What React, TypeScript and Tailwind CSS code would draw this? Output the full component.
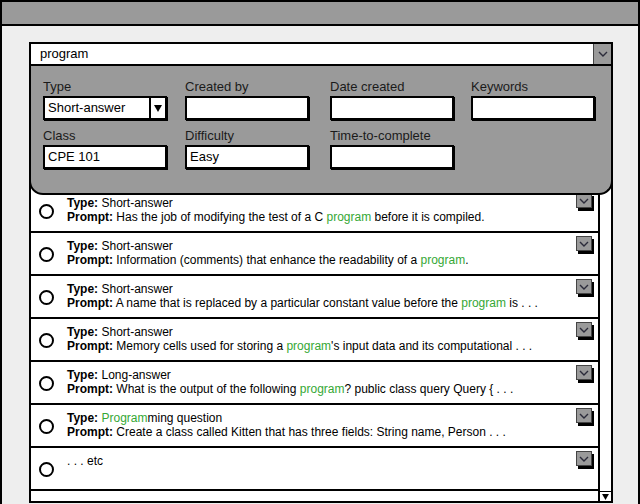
import type { ReactNode } from "react";

function Hl({ children }: { children: ReactNode }) {
  return <span className="text-[#35a835]">{children}</span>;
}

type Question = {
  type?: ReactNode;
  prompt?: ReactNode;
  note?: string;
};

const questions: Question[] = [
  {
    type: "Short-answer",
    prompt: (
      <>
        Has the job of modifying the test of a C <Hl>program</Hl> before it is compiled.
      </>
    ),
  },
  {
    type: "Short-answer",
    prompt: (
      <>
        Information (comments) that enhance the readability of a <Hl>program</Hl>.
      </>
    ),
  },
  {
    type: "Short-answer",
    prompt: (
      <>
        A name that is replaced by a particular constant value before the <Hl>program</Hl> is . . .
      </>
    ),
  },
  {
    type: "Short-answer",
    prompt: (
      <>
        Memory cells used for storing a <Hl>program</Hl>'s input data and its computational . . .
      </>
    ),
  },
  {
    type: "Long-answer",
    prompt: (
      <>
        What is the output of the following <Hl>program</Hl>? public class query Query {"{"} . . .
      </>
    ),
  },
  {
    type: (
      <>
        <Hl>Program</Hl>ming question
      </>
    ),
    prompt: "Create a class called Kitten that has three fields: String name, Person . . .",
  },
  { note: ". . . etc" },
];

function Chevron() {
  return (
    <svg width="10" height="6" viewBox="0 0 10 6" fill="none">
      <path d="M1 1 L5 5 L9 1" stroke="#2b2b3a" strokeWidth="1.4" />
    </svg>
  );
}

function DownTriangle({ size = 8 }: { size?: number }) {
  return (
    <svg width={size} height={size - 1} viewBox="0 0 8 7">
      <path d="M0 0 H8 L4 7 Z" fill="#000" />
    </svg>
  );
}

function Field({ label, value, select }: { label: string; value?: string; select?: boolean }) {
  return (
    <div className="flex w-[124px] flex-col">
      <span className="h-[16px] text-[13px] leading-[16px] text-[#1a1a1a]">{label}</span>
      <div className="mt-[1px] flex h-[24px] border-2 border-black bg-white shadow-[1px_1px_0_#000]">
        <span className="flex-1 pl-[3px] text-[13px] leading-[20px] text-black">{value}</span>
        {select && (
          <span className="flex w-[16px] items-center justify-center border-l-2 border-black">
            <DownTriangle />
          </span>
        )}
      </div>
    </div>
  );
}

function QuestionRow({ q }: { q?: Question }) {
  return (
    <div className="relative flex h-[43px] shrink-0 border-b-2 border-black bg-white">
      <div className="flex w-[36px] shrink-0 items-center pl-[8px] pt-[2px]">
        {q && <span className="h-[15px] w-[15px] rounded-full border-2 border-black" />}
      </div>
      {q && (
        <div className="pt-[6px] text-[12px] leading-[14px] text-black">
          {q.note ? (
            <div>{q.note}</div>
          ) : (
            <>
              <div>
                <b>Type:</b> {q.type}
              </div>
              <div>
                <b>Prompt:</b> {q.prompt}
              </div>
            </>
          )}
        </div>
      )}
      {q && (
        <div className="absolute right-[6px] top-[3px] flex h-[15px] w-[16px] items-center justify-center border border-[#444] bg-[#9a9a9a] shadow-[2px_3px_0_#000]">
          <Chevron />
        </div>
      )}
    </div>
  );
}

export default function App() {
  return (
    <div className="relative flex h-[504px] w-[640px] flex-col overflow-hidden border-x-2 border-black bg-[#eeeeee] font-['Liberation_Sans',Arial,sans-serif]">
      <div className="h-[26px] shrink-0 border-y-2 border-black bg-[#9a9a9a]" />

      <div className="relative mb-[1px] ml-[27px] mr-[25px] mt-[16px] flex min-h-0 flex-1 flex-col">
        <div className="flex h-[24px] shrink-0 border-2 border-black bg-white">
          <span className="flex-1 pl-[9px] text-[13px] leading-[20px] text-black">program</span>
          <span className="flex w-[18px] items-center justify-center border-l border-[#444] bg-[#9a9a9a]">
            <Chevron />
          </span>
        </div>

        <div className="flex min-h-0 flex-1 border-x-2 border-b-2 border-black bg-white">
          <div className="flex min-w-0 flex-1 flex-col overflow-hidden pt-[124px]">
            {questions.map((q, i) => (
              <QuestionRow key={i} q={q} />
            ))}
            <QuestionRow />
          </div>
          <div className="flex w-[13px] shrink-0 flex-col justify-end border-l-2 border-black bg-white">
            <div className="flex h-[10px] items-center justify-center border-t border-black">
              <DownTriangle size={7} />
            </div>
          </div>
        </div>

        <div className="absolute left-0 right-0 top-[24px] z-10 h-[129px] rounded-b-[14px] border-x-2 border-b-2 border-black bg-[#9a9a9a] pl-[12px] pt-[13px]">
          <div className="grid grid-cols-[142px_145px_141px_124px] gap-y-[8px]">
            <Field label="Type" value="Short-answer" select />
            <Field label="Created by" />
            <Field label="Date created" />
            <Field label="Keywords" />
            <Field label="Class" value="CPE 101" />
            <Field label="Difficulty" value="Easy" />
            <Field label="Time-to-complete" />
          </div>
        </div>
      </div>
    </div>
  );
}
